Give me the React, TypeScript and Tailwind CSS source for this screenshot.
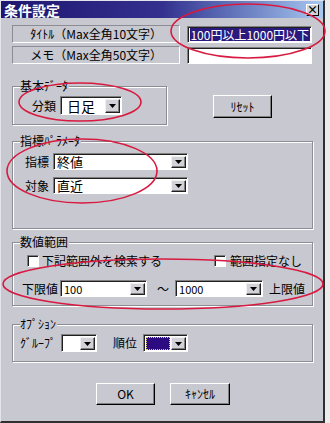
import React from "react";

function Arrow() {
  return (
    <svg width="7" height="4" viewBox="0 0 7 4">
      <path d="M0 0H7L3.5 4Z" fill="#000" />
    </svg>
  );
}

function DropBtn() {
  return (
    <div className="flex h-full w-[15px] shrink-0 items-center justify-center border border-t-[#f0f0f4] border-l-[#f0f0f4] border-r-[#202020] border-b-[#202020] bg-[#d2d2d8] shadow-[inset_-1px_-1px_0_#808080]">
      <Arrow />
    </div>
  );
}

function Select({ cls, text, textCls = "text-[13px]" }: { cls: string; text?: React.ReactNode; textCls?: string }) {
  return (
    <div className={"flex items-stretch bg-white border border-t-[#808080] border-l-[#808080] border-b-white border-r-white shadow-[inset_1px_1px_0_#202020] pt-[2px] pl-[2px] pr-[1px] pb-[1px] " + cls}>
      <div className={"flex flex-1 items-center whitespace-nowrap pl-[1px] leading-[12px] " + textCls}>{text}</div>
      <DropBtn />
    </div>
  );
}

function Group({ title, cls, children }: { title: string; cls: string; children: React.ReactNode }) {
  return (
    <div className={"relative border border-[#8c8c94] shadow-[inset_1px_1px_0_#fff,1px_1px_0_#fff] " + cls}>
      <span className="absolute -top-[10px] left-[7px] bg-[#c8c8d0] pr-[1px] text-[12px] leading-[18px]">{title}</span>
      {children}
    </div>
  );
}

function Check() {
  return (
    <div className="h-[12px] w-[12px] shrink-0 border border-t-[#808080] border-l-[#808080] border-b-white border-r-white bg-white shadow-[inset_1px_1px_0_#202020]" />
  );
}

function Btn({ cls, children }: { cls: string; children: React.ReactNode }) {
  return (
    <div className={"flex items-center justify-center border border-t-white border-l-white border-r-[#000] border-b-[#000] bg-[#c8c8d0] shadow-[inset_-1px_-1px_0_#808080] text-[12px] leading-none " + cls}>
      {children}
    </div>
  );
}

export default function App() {
  return (
    <div className="relative h-[423px] w-[330px] bg-[#ececec] font-['Noto_Sans_CJK_JP','Noto_Sans',sans-serif] text-black">
      <div className="flex h-[423px] w-[325px] flex-col border-l border-t border-l-[#e4e4ea] border-t-[#e4e4ea] border-r-2 border-b-2 border-r-[#303030] border-b-[#303030] bg-[#c8c8d0]">
        {/* title bar */}
        <div className="flex h-[17px] items-center justify-between bg-gradient-to-r from-[#1e1670] via-[#34308e] to-[#a8c8f0] pl-[3px] pr-[4px]">
          <span className="text-[14px] font-bold leading-none text-white">条件設定</span>
          <div className="flex h-[12px] w-[13px] items-center justify-center border border-t-white border-l-white border-r-[#000] border-b-[#000] bg-[#d2d2d8] text-[11px] font-bold leading-none">
            ×
          </div>
        </div>

        <div className="flex flex-col px-[11px]">
          {/* row 1 */}
          <div className="mt-[7px] flex items-center">
            <div className="flex h-[18px] w-[169px] items-center justify-center border border-t-[#8c8c94] border-l-[#8c8c94] border-b-white border-r-white text-[12px] leading-none">
              ﾀｲﾄﾙ（Max全角10文字）
            </div>
            <div className="ml-[7px] flex h-[17px] w-[125px] items-center overflow-hidden border border-t-[#808080] border-l-[#808080] border-b-white border-r-white bg-white pl-[2px] shadow-[inset_1px_1px_0_#202020]">
              <span className="whitespace-nowrap bg-[#2a1a80] pr-[1px] text-[12px] leading-[13px] text-white">100円以上1000円以下</span>
            </div>
          </div>
          {/* row 2 */}
          <div className="mt-[3px] flex items-center">
            <div className="flex h-[18px] w-[169px] items-center justify-center border border-t-[#8c8c94] border-l-[#8c8c94] border-b-white border-r-white text-[12px] leading-none">
              メモ（Max全角50文字）
            </div>
            <div className="ml-[7px] h-[17px] w-[125px] border border-t-[#808080] border-l-[#808080] border-b-white border-r-white bg-white shadow-[inset_1px_1px_0_#202020]" />
          </div>

          {/* basic data + reset */}
          <div className="mt-[22px] flex items-start">
            <Group title="基本ﾃﾞｰﾀ" cls="h-[39px] w-[155px]">
              <div className="mt-[9px] flex items-center pl-[19px]">
                <span className="text-[12px] leading-none">分類</span>
                <Select cls="ml-[4px] h-[19px] w-[62px]" text="日足" textCls="text-[14px] pl-[4px]" />
              </div>
            </Group>
            <Btn cls="ml-[46px] mt-[9px] h-[23px] w-[59px]">ﾘｾｯﾄ</Btn>
          </div>

          {/* indicator params */}
          <Group title="指標ﾊﾟﾗﾒｰﾀ" cls="mt-[16px] h-[88px] w-[301px]">
            <div className="mt-[11px] flex items-center pl-[12px]">
              <span className="text-[12px] leading-none">指標</span>
              <Select cls="ml-[4px] h-[17px] w-[135px]" text="終値" />
            </div>
            <div className="mt-[7px] flex items-center pl-[12px]">
              <span className="text-[12px] leading-none">対象</span>
              <Select cls="ml-[4px] h-[17px] w-[135px]" text="直近" />
            </div>
          </Group>

          {/* numeric range */}
          <Group title="数値範囲" cls="mt-[13px] h-[64px] w-[301px]">
            <div className="mt-[10px] flex h-[16px] items-center pl-[14px]">
              <Check />
              <span className="ml-[3px] text-[12px] leading-none">下記範囲外を検索する</span>
              <div className="ml-[52px]">
                <Check />
              </div>
              <span className="ml-[4px] text-[12px] leading-none">範囲指定なし</span>
            </div>
            <div className="mt-[11px] flex items-center pl-[9px]">
              <span className="text-[12px] leading-none">下限値</span>
              <Select cls="ml-[2px] h-[17px] w-[87px]" text="100" textCls="text-[11px]" />
              <span className="ml-[10px] text-[12px] leading-none">～</span>
              <Select cls="ml-[6px] h-[17px] w-[88px]" text="1000" textCls="text-[11px]" />
              <span className="ml-[6px] text-[12px] leading-none">上限値</span>
            </div>
          </Group>

          {/* options */}
          <Group title="ｵﾌﾟｼｮﾝ" cls="mt-[18px] h-[38px] w-[301px]">
            <div className="mt-[9px] flex items-center pl-[7px]">
              <span className="text-[12px] leading-none">ｸﾞﾙｰﾌﾟ</span>
              <Select cls="ml-[5px] h-[18px] w-[36px]" />
              <span className="ml-[16px] text-[12px] leading-none">順位</span>
              <div className="ml-[6px] flex h-[18px] w-[45px] items-stretch border border-t-[#808080] border-l-[#808080] border-b-white border-r-white bg-white shadow-[inset_1px_1px_0_#202020] pt-[2px] pl-[2px] pr-[1px] pb-[1px]">
                <div className="mr-[1px] flex-1 border border-dotted border-[#e8d060] bg-[#2c0a80]" />
                <DropBtn />
              </div>
            </div>
          </Group>

          {/* buttons */}
          <div className="mt-[21px] flex justify-center gap-[15px] pl-[2px]">
            <Btn cls="h-[22px] w-[59px]">OK</Btn>
            <Btn cls="h-[22px] w-[60px]">ｷｬﾝｾﾙ</Btn>
          </div>
        </div>
      </div>

      {/* red annotation ellipses */}
      <svg className="pointer-events-none absolute left-0 top-0" width="330" height="423" viewBox="0 0 330 423">
        <g fill="none" stroke="#d81a40" strokeWidth="1.6">
          <ellipse cx="248" cy="31" rx="77" ry="27" />
          <ellipse cx="80" cy="102" rx="61" ry="19" />
          <ellipse cx="82" cy="171" rx="75" ry="32" />
          <ellipse cx="163" cy="284" rx="160" ry="25" />
        </g>
      </svg>
    </div>
  );
}
